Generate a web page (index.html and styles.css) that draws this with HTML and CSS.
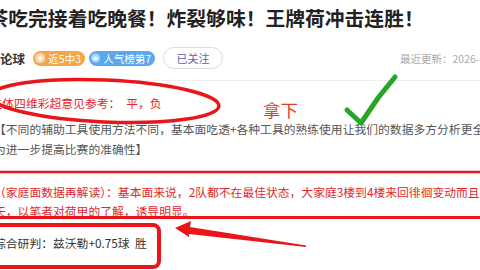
FILE: index.html
```html
<!DOCTYPE html>
<html lang="zh-CN">
<head>
    <meta charset="UTF-8">
    <meta name="viewport" content="width=device-width, initial-scale=1.0">
    <title>王牌荷冲击连胜</title>
    <link rel="stylesheet" href="styles.css">
</head>
<body>
    <div class="page">
        <h1 class="title">茶吃完接着吃晚餐！炸裂够味！王牌荷冲击连胜！</h1>

        <div class="meta">
            <span class="author">论球</span>
            <span class="badge badge-orange">
                <svg class="badge-icon" viewBox="0 0 12 12">
                    <circle cx="6" cy="6" r="6" fill="#fff" fill-opacity="0.5"/>
                    <path d="M6 2.3l1.1 2.3 2.5.3-1.8 1.7.5 2.5L6 7.9 3.7 9.1l.5-2.5-1.8-1.7 2.5-.3z" fill="#fff"/>
                </svg>
                近5中3
            </span>
            <span class="badge badge-blue">
                <svg class="badge-icon" viewBox="0 0 12 12">
                    <circle cx="6" cy="6" r="6" fill="#fff" fill-opacity="0.5"/>
                    <path d="M2.8 4.2l1.9 1.5L6 3.3l1.3 2.4 1.9-1.5-.6 4.3H3.4z" fill="#fff"/>
                </svg>
                人气榜第7
            </span>
            <span class="follow">已关注</span>
            <span class="updated">最近更新：2026-01-10 17:26</span>
        </div>

        <div class="article">
            <p class="pick">立体四维彩超意见参考：　平，负</p>
            <p class="note">【不同的辅助工具使用方法不同，基本面吃透+各种工具的熟练使用让我们的数据多方分析更全面，<br>为进一步提高比赛的准确性】</p>
            <p class="analysis">（家庭面数据再解读）：基本面来说，2队都不在最佳状态，大家庭3楼到4楼来回徘徊变动而且<br>天，以笔者对荷甲的了解，诱导明显。</p>
            <p class="verdict">综合研判：兹沃勒+0.75球&nbsp;&nbsp;胜</p>
        </div>

        <!-- hand drawn marks over the article -->
        <span class="mark-text">拿下</span>
        <svg class="marks" viewBox="0 0 480 270">
            <ellipse cx="105" cy="101" rx="114" ry="21" transform="rotate(2.5 105 101)" fill="none" stroke="#e8161b" stroke-width="3.5"/>
            <polyline points="347,110 361,123 378,98 395,77" fill="none" stroke="#27a527" stroke-width="5" stroke-linecap="round" stroke-linejoin="round"/>
            <line x1="-10" y1="172" x2="490" y2="172" stroke="#e8161b" stroke-width="2.5"/>
            <line x1="-10" y1="217.5" x2="490" y2="217.5" stroke="#e8161b" stroke-width="3"/>
            <rect x="-20" y="225" width="179" height="42" rx="6" fill="none" stroke="#e8161b" stroke-width="4"/>
            <polygon points="175,228 191,221 190,227 306,245.5 306,247 189,234 189,237" fill="#e8161b"/>
        </svg>
    </div>
</body>
</html>
```

FILE: styles.css
```css
body {
    margin: 0;
    background-color: #fff;
    font-family: "Noto Sans CJK SC", "Liberation Sans", sans-serif;
    overflow: hidden;
}
.page {
    position: relative;
    width: 480px;
    height: 270px;
    overflow: hidden;
}
.title {
    margin: 0 0 0 -11.5px;
    padding-top: 4px;
    font-size: 19.8px;
    line-height: 28px;
    font-weight: 700;
    color: #222;
    white-space: nowrap;
}
.meta {
    display: flex;
    align-items: center;
    height: 22px;
    margin-top: 15px;
    padding-bottom: 11px;
    border-bottom: 1px solid #eee;
    white-space: nowrap;
}
.meta > * {
    flex-shrink: 0;
}
.author {
    font-size: 12.5px;
    font-weight: 700;
    color: #333;
    margin-right: 8px;
}
.badge {
    display: flex;
    align-items: center;
    box-sizing: border-box;
    height: 15px;
    padding: 0 4px 0 2px;
    border-radius: 8px;
    font-size: 10.5px;
    color: #fff;
    margin-right: 4px;
}
.badge-orange {
    background-color: #f2a648;
    width: 52px;
}
.badge-blue {
    background-color: #5aa7f2;
    width: 66px;
}
.badge-icon {
    width: 12px;
    height: 12px;
    margin-right: 3px;
}
.follow {
    box-sizing: border-box;
    margin-left: 4px;
    width: 60px;
    height: 22px;
    line-height: 20px;
    border: 1px solid #ddd;
    border-radius: 11px;
    text-align: center;
    font-size: 11px;
    color: #5d5fb8;
}
.updated {
    margin-left: 177px;
    font-size: 10.5px;
    color: #aaa;
}
.article p {
    margin: 0;
    font-size: 11.8px;
    white-space: nowrap;
}
.pick {
    margin-top: 11.7px !important;
    margin-left: -9.5px !important;
    line-height: 20px;
    color: #e5262b;
}
.note {
    margin-top: 6.3px !important;
    margin-left: -6px !important;
    line-height: 20px;
    color: #555;
}
.analysis {
    margin-top: 23px !important;
    margin-left: -6px !important;
    line-height: 19px;
    color: #e5262b;
}
.verdict {
    margin-top: 13.5px !important;
    margin-left: -6px !important;
    line-height: 19px;
    color: #333;
}
.mark-text {
    position: absolute;
    left: 263px;
    top: 100px;
    font-size: 17.5px;
    line-height: 20px;
    color: #e6392e;
}
.marks {
    position: absolute;
    left: 0;
    top: 0;
    width: 480px;
    height: 270px;
    pointer-events: none;
}
```
